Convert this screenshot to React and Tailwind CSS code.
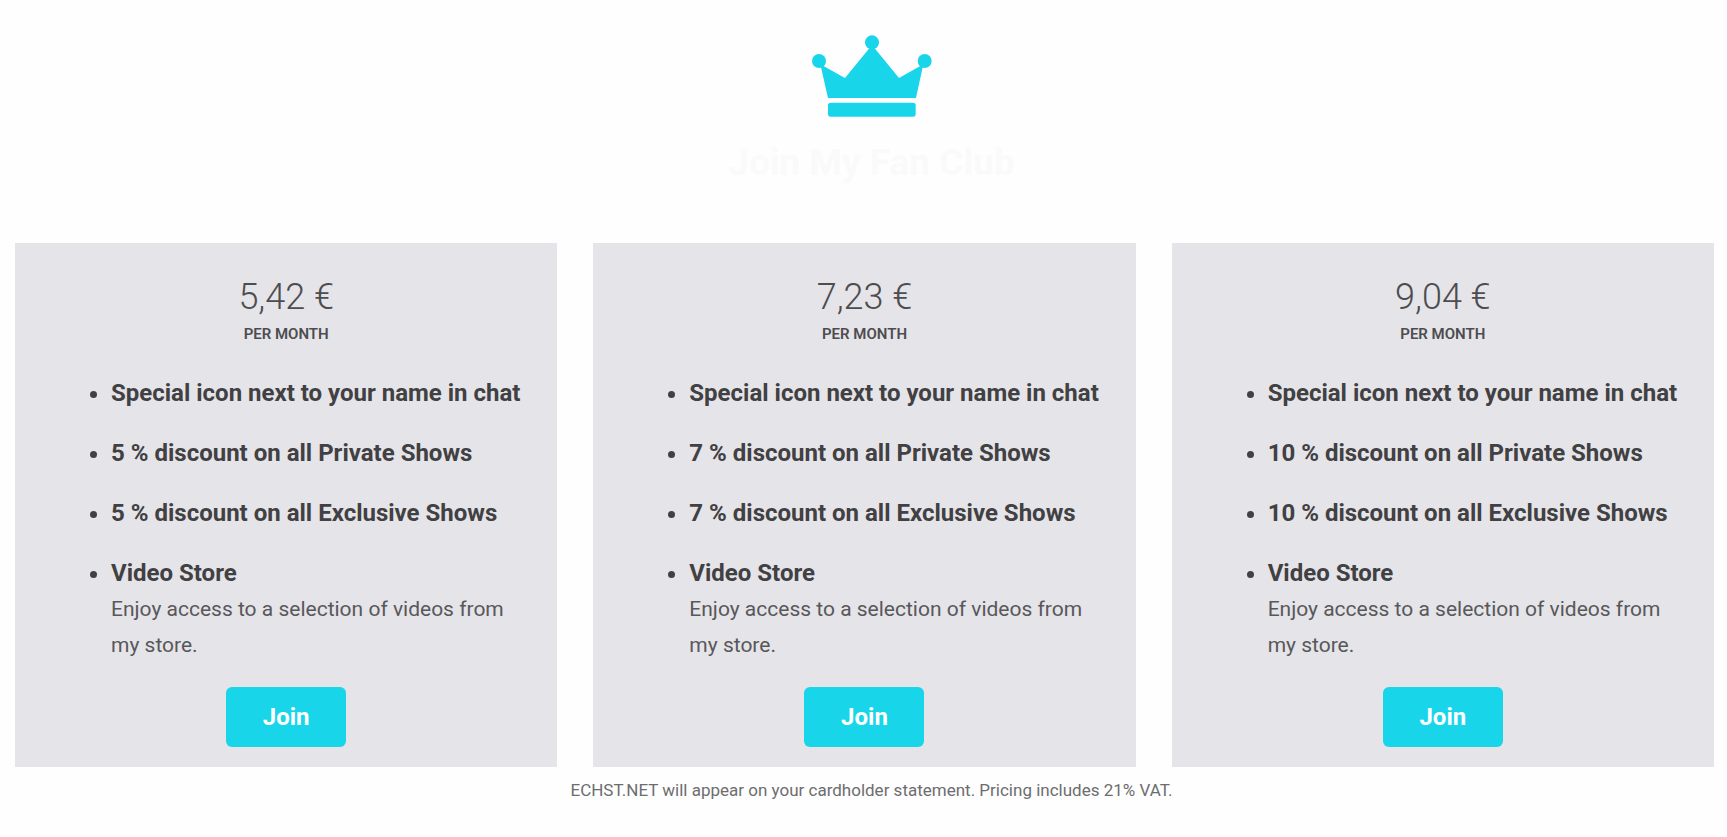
const plans = [
  { price: "5,42 €", discount: 5 },
  { price: "7,23 €", discount: 7 },
  { price: "9,04 €", discount: 10 },
];

function Crown() {
  return (
    <svg viewBox="0 0 360 246" className="w-[120px] h-[82px]" fill="currentColor" aria-hidden="true">
      <circle cx="21" cy="78" r="21" />
      <circle cx="180" cy="22" r="21" />
      <circle cx="338" cy="78" r="21" />
      <path d="M25 88L99 129L172 40H188L261 129L334 88L312 189H48Z" />
      <rect x="48" y="203" width="263" height="42" rx="8" />
    </svg>
  );
}

function PlanCard({ price, discount }) {
  return (
    <section className="flex flex-1 flex-col items-center bg-[#e5e4e9] pt-8 pb-5">
      <p className="text-4xl leading-[44px] font-light">{price}</p>
      <p className="text-[15px] leading-[30px] font-semibold uppercase">Per month</p>
      <ul className="mt-[26px] flex w-full list-disc flex-col gap-6 pr-[30px] pl-24 text-2xl leading-9 font-bold text-[#414042]">
        <li>Special icon next to your name in chat</li>
        <li>{discount} % discount on all Private Shows</li>
        <li>{discount} % discount on all Exclusive Shows</li>
        <li>
          Video Store
          <p className="text-[21px] leading-9 font-normal text-[#58585a]">
            Enjoy access to a selection of videos from my store.
          </p>
        </li>
      </ul>
      <button type="button" className="mt-6 h-[60px] w-[120px] rounded-md bg-[#18d5ea] text-2xl font-bold text-white">
        Join
      </button>
    </section>
  );
}

export default function App() {
  return (
    <main className="min-h-screen bg-[#fefefe] font-[Roboto,sans-serif] text-[#4d4d4f]">
      <header className="flex flex-col items-center pt-[35px] pl-4 text-[#18d5ea]">
        <Crown />
        <h1 className="mt-5 text-[37px] leading-[52px] font-bold text-[#fafafa]">Join My Fan Club</h1>
      </header>
      <div className="mt-[54px] flex gap-9 pr-[13px] pl-[15px]">
        {plans.map((plan) => (
          <PlanCard key={plan.price} {...plan} />
        ))}
      </div>
      <p className="mt-2 pl-4 text-center text-[17px] leading-[30px] text-[#6d6d6f]">
        ECHST.NET will appear on your cardholder statement. Pricing includes 21% VAT.
      </p>
    </main>
  );
}
